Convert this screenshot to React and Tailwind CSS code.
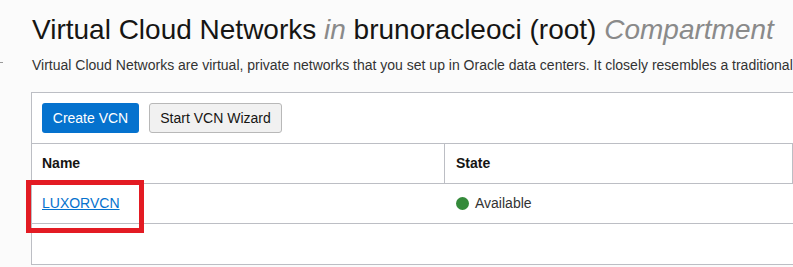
export default function App() {
  return (
    <div className="relative h-[267px] w-[793px] overflow-hidden bg-[#fbfbfb] font-['Liberation_Sans',Arial,sans-serif] text-[#161513]">
      {/* sidebar edge tick */}
      <div className="absolute left-0 top-[62px] h-px w-[3px] bg-[#9a9a9a]" />

      <div className="pl-[32px] pt-[14px]">
        <h1 className="whitespace-nowrap text-[28px] leading-[32px] font-normal">
          Virtual Cloud Networks <i className="text-[#8a8a8a]">in</i> brunoracleoci (root){' '}
          <i className="text-[#8a8a8a]">Compartment</i>
        </h1>
        <p className="mt-[10px] whitespace-nowrap text-[14px] leading-[18px] text-[#333]">
          Virtual Cloud Networks are virtual, private networks that you set up in Oracle data centers. It closely resembles a traditional
        </p>
      </div>

      <div className="ml-[31px] mt-[18px] w-[800px] border border-[#bcbec4] bg-white">
        <div className="flex gap-[10px] px-[10px] py-[10px]">
          <button className="h-[30px] w-[97px] rounded-[3px] bg-[#0572ce] text-[14px] text-white">Create VCN</button>
          <button className="h-[30px] w-[133px] rounded-[3px] border border-[#b8b8b8] bg-[#f1f1f1] text-[14px] text-[#161513]">
            Start VCN Wizard
          </button>
        </div>

        <div className="grid grid-cols-[413px_348px_1fr] border-t border-[#bcbec4] text-[14px]">
          <div className="flex h-[39px] items-center border-r border-[#bcbec4] pl-[10px] font-bold">Name</div>
          <div className="flex h-[39px] items-center border-r border-[#bcbec4] pl-[11px] font-bold">State</div>
          <div />
          <div className="col-span-3 flex h-[41px] border-y border-[#bcbec4]">
            <div className="flex w-[413px] items-center pl-[10px]">
              <a href="#" className="text-[#0572ce] underline">
                LUXORVCN
              </a>
            </div>
            <div className="flex items-center gap-[6px] pl-[11px]">
              <span className="h-[13px] w-[13px] rounded-full bg-[#348a3a]" />
              <span className="text-[#333]">Available</span>
            </div>
          </div>
          <div className="col-span-3 h-[40px]" />
        </div>
      </div>

      {/* highlight box */}
      <div className="absolute left-[26px] top-[180px] h-[53px] w-[118px] border-[5px] border-[#e31b23]" />
    </div>
  );
}
